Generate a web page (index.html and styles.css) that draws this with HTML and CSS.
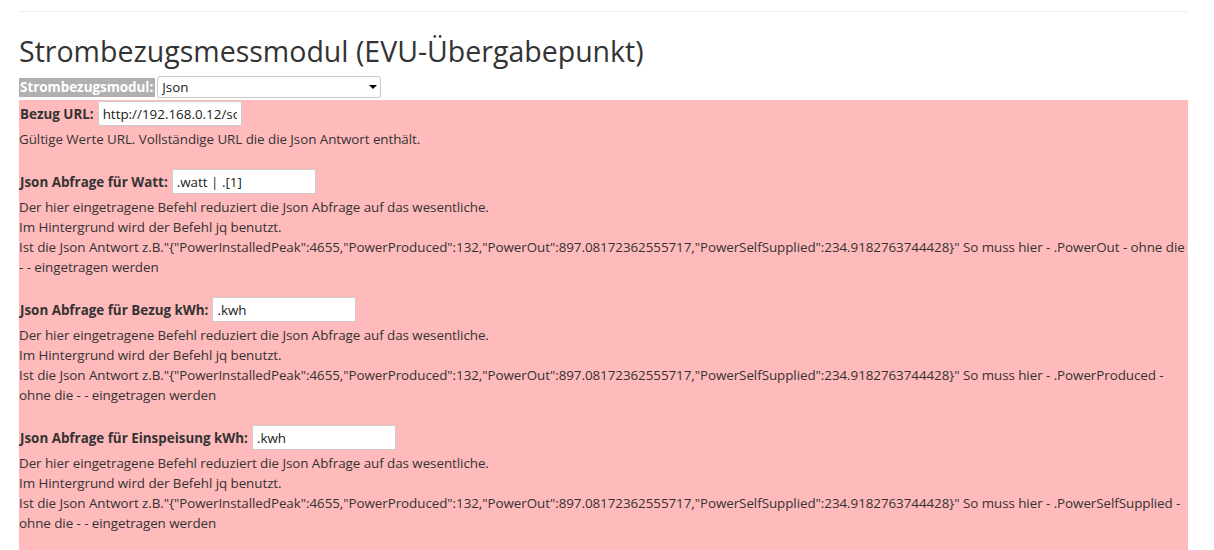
FILE: index.html
```html
<!DOCTYPE html>
<html lang="de">
<head>
<meta charset="utf-8">
<title>Strombezugsmessmodul</title>
<link rel="stylesheet" href="styles.css">
</head>
<body>
<div class="container">
  <hr class="rule">
  <h1 class="title">Strombezugsmessmodul (EVU-Übergabepunkt)</h1>
  <div class="module-row">
    <span class="module-label">Strombezugsmodul:</span>
    <span class="select-wrap">
      <select class="module-select"><option>Json</option></select>
    </span>
  </div>
  <div class="panel">
    <div class="field">
      <label class="field-label">Bezug URL:</label>
      <input class="field-input" type="text" value="http://192.168.0.12/solar_api">
    </div>
    <p class="help">Gültige Werte URL. Vollständige URL die die Json Antwort enthält.</p>
    <div class="spacer"></div>

    <div class="field">
      <label class="field-label">Json Abfrage für Watt:</label>
      <input class="field-input" type="text" value=".watt | .[1]">
    </div>
    <p class="help">Der hier eingetragene Befehl reduziert die Json Abfrage auf das wesentliche.<br>Im Hintergrund wird der Befehl jq benutzt.<br>Ist die Json Antwort z.B."{"PowerInstalledPeak":4655,"PowerProduced":132,"PowerOut":897.08172362555717,"PowerSelfSupplied":234.9182763744428}" So muss hier - .PowerOut - ohne die - - eingetragen werden</p>
    <div class="spacer"></div>

    <div class="field">
      <label class="field-label">Json Abfrage für Bezug kWh:</label>
      <input class="field-input" type="text" value=".kwh">
    </div>
    <p class="help">Der hier eingetragene Befehl reduziert die Json Abfrage auf das wesentliche.<br>Im Hintergrund wird der Befehl jq benutzt.<br>Ist die Json Antwort z.B."{"PowerInstalledPeak":4655,"PowerProduced":132,"PowerOut":897.08172362555717,"PowerSelfSupplied":234.9182763744428}" So muss hier - .PowerProduced - ohne die - - eingetragen werden</p>
    <div class="spacer"></div>

    <div class="field">
      <label class="field-label">Json Abfrage für Einspeisung kWh:</label>
      <input class="field-input" type="text" value=".kwh">
    </div>
    <p class="help">Der hier eingetragene Befehl reduziert die Json Abfrage auf das wesentliche.<br>Im Hintergrund wird der Befehl jq benutzt.<br>Ist die Json Antwort z.B."{"PowerInstalledPeak":4655,"PowerProduced":132,"PowerOut":897.08172362555717,"PowerSelfSupplied":234.9182763744428}" So muss hier - .PowerSelfSupplied - ohne die - - eingetragen werden</p>
    <div class="spacer"></div>
  </div>
</div>
</body>
</html>
```

FILE: styles.css
```css
* { box-sizing: border-box; }
html, body { margin: 0; padding: 0; background: #fff; }
body {
  font-family: "Open Sans", "Noto Sans", sans-serif;
  font-size: 13.4px;
  line-height: 20px;
  color: #333;
}
.container {
  margin: 0 26px 0 19px;
}
.rule {
  margin: 11px 0 0 0;
  border: 0;
  border-top: 1px solid #eee;
  height: 0;
}
.title {
  margin: 19px 0 0 0;
  font-size: 28.5px;
  font-weight: 400;
  line-height: 40px;
  height: 44px;
  color: #333;
}
.module-row {
  display: flex;
  align-items: center;
  height: 24px;
}
.module-label {
  background: #b0b0b0;
  color: #fff;
  font-weight: 700;
  line-height: 19px;
  padding: 0 2px 0 1px;
  margin-right: 2px;
}
.select-wrap {
  position: relative;
  display: inline-block;
}
.select-wrap::after {
  content: "";
  position: absolute;
  right: 4px;
  top: 9px;
  border-left: 4px solid transparent;
  border-right: 4px solid transparent;
  border-top: 4px solid #000;
  pointer-events: none;
}
.module-select {
  -webkit-appearance: none;
  appearance: none;
  width: 224px;
  height: 22px;
  border: 1px solid #c8c8c8;
  border-radius: 3px;
  background: #fff;
  font-family: inherit;
  font-size: 13.4px;
  color: #222;
  padding: 0 4px;
  margin: 0;
}
.panel {
  background: #ffbbbb;
  padding-top: 1px;
  margin-top: 1px;
  min-height: 460px;
}
.field {
  display: flex;
  align-items: center;
  height: 25px;
  margin-bottom: 3px;
}
.field-label {
  font-weight: 700;
  margin-right: 4px;
  margin-left: 1px;
}
.field-input {
  width: 144px;
  height: 25px;
  border: 1px solid #ccc;
  border-radius: 2px;
  background: #fff;
  padding: 0 4px;
  font-family: inherit;
  font-size: 13.4px;
  color: #222;
  margin: 0;
}
.help {
  margin: 0;
  letter-spacing: -0.06px;
}
.spacer {
  height: 20px;
}
```
